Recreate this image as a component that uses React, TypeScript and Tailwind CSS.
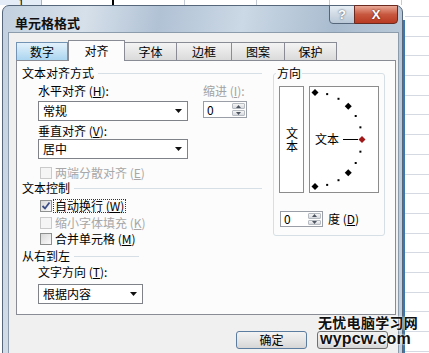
import React from "react"

const ROWS = Array.from({ length: 18 })

function Arrow() {
  return (
    <svg width="7" height="4" viewBox="0 0 7 4">
      <path d="M0 0h7L3.5 4z" fill="#111" />
    </svg>
  )
}

function Select({ text, className }: { text: string; className: string }) {
  return (
    <div className={`flex h-[20px] items-center border border-[#7f8288] bg-white pl-[4px] pr-[5px] ${className}`}>
      <span className="flex-1">{text}</span>
      <Arrow />
    </div>
  )
}

function Spin({ className }: { className: string }) {
  return (
    <div className={`flex items-stretch border border-[#9a9ea6] bg-white ${className}`}>
      <span className="flex flex-1 items-center pl-[3px]">0</span>
      <div className="flex w-[15px] flex-col gap-px p-px">
        <div className="flex flex-1 items-center justify-center rounded-[1px] border border-[#b7bbc2] bg-[linear-gradient(#f6f6f6,#d6d9de)]">
          <svg width="5" height="3" viewBox="0 0 5 3">
            <path d="M0 3h5L2.5 0z" fill="#4d5560" />
          </svg>
        </div>
        <div className="flex flex-1 items-center justify-center rounded-[1px] border border-[#b7bbc2] bg-[linear-gradient(#f6f6f6,#d6d9de)]">
          <svg width="5" height="3" viewBox="0 0 5 3">
            <path d="M0 0h5L2.5 3z" fill="#4d5560" />
          </svg>
        </div>
      </div>
    </div>
  )
}

function Check({ checked, disabled }: { checked?: boolean; disabled?: boolean }) {
  return (
    <span
      className={`flex h-[12px] w-[12px] shrink-0 items-center justify-center border ${
        disabled ? "border-[#cacaca] bg-[#f5f5f5]" : "border-[#8e8f8f] bg-[linear-gradient(135deg,#d9d9d9,#fbfbfb)]"
      }`}
    >
      {checked && (
        <svg width="10" height="10" viewBox="0 0 10 10">
          <path d="M1.5 5l2.5 2.5L8.5 1.5" fill="none" stroke="#3b4d86" strokeWidth="1.8" />
        </svg>
      )}
    </span>
  )
}

function Group({ label, line }: { label: string; line: string }) {
  return (
    <div className="flex items-center pl-[5px]">
      <span>{label}</span>
      <span className={`ml-[4px] h-px bg-[#d5dfe5] ${line}`} />
    </div>
  )
}

// points on the orientation arc, every 15 degrees
const ARC = Array.from({ length: 13 }).map((_, i) => {
  const deg = 90 - i * 15
  const r = (deg * Math.PI) / 180
  return { deg, x: 5 + 47 * Math.cos(r), y: 52.5 - 47 * Math.sin(r) }
})

function Diamond({ x, y, color }: { x: number; y: number; color: string }) {
  return <path d={`M${x} ${y - 3.5}L${x + 3.5} ${y}L${x} ${y + 3.5}L${x - 3.5} ${y}z`} fill={color} />
}

export default function App() {
  return (
    <div className="relative h-[353px] w-[429px] overflow-hidden bg-white font-['Noto_Sans_CJK_SC','Noto_Sans',sans-serif] text-[12px] leading-[12px] text-black">
      {/* Sheet behind the dialog */}
      <div className="absolute inset-0">
        <div className="flex h-[5px]">
          <div className="w-[42px] overflow-hidden border-r border-[#9eb6ce] bg-[#e4ecf7] pl-[18px] text-[11px] leading-[5px]">1</div>
          <div className="relative w-[143px] border-r border-[#c5cbd6]">
            <span className="absolute left-[70px] top-0 h-[5px] w-[2px] bg-black" />
          </div>
          <div className="w-[72px] border-r border-[#c5cbd6]" />
          <div className="w-[73px] border-r border-[#c5cbd6]" />
          <div className="w-[72px] border-r border-[#c5cbd6]" />
        </div>
        <div className="absolute bottom-0 left-[405px] right-0 top-0 flex flex-col">
          <div className="h-[17px] shrink-0 border-b border-[#d4d9e2]" />
          {ROWS.map((_, i) => (
            <div key={i} className="h-[19.7px] shrink-0 border-b border-[#d4d9e2]" />
          ))}
        </div>
        <div className="absolute bottom-0 left-[403px] top-[20px] w-[2px] bg-[#3b78ae]" />
      </div>

      {/* Dialog */}
      <div className="absolute left-[2px] top-[5px] flex h-[380px] w-[401px] flex-col rounded-t-[7px] border border-[#56677c] bg-[linear-gradient(100deg,#c2d0df_0%,#d6e0ea_18%,#b1c2d5_34%,#cbd8e5_52%,#a9bccf_72%,#c6d3e1_100%)]">
        <div className="flex h-[26px] shrink-0 items-start justify-between">
          <div className="pl-[12px] pt-[10px] text-[13px] font-bold leading-[13px] text-[#101010]">单元格格式</div>
          <div className="-mt-px mr-[4px] flex">
            <div className="flex h-[19px] w-[26px] items-center justify-center rounded-bl-[4px] border border-[#55667b] bg-[linear-gradient(#e6edf4,#b9c7d6)] font-['Liberation_Sans',sans-serif] text-[13px] font-bold text-white [text-shadow:0_0_2px_#2c3e55]">
              ?
            </div>
            <div className="-ml-px flex h-[19px] w-[44px] items-center justify-center rounded-br-[4px] border border-[#6a2a20] bg-[linear-gradient(#e9a896,#c8573f_50%,#b83a22)] font-['Liberation_Sans',sans-serif] text-[13px] font-bold text-white [text-shadow:0_0_2px_#4a1008]">
              X
            </div>
          </div>
        </div>

        <div className="ml-[5px] mr-[3px] flex flex-1 flex-col border border-b-0 border-[#8d9cad] bg-[#f0f0f0] pt-[7px]">
          {/* Tabs */}
          <div className="ml-[7px] flex h-[20px] items-end">
            <div className="flex h-[18px] w-[52px] items-center justify-center border border-b-0 border-[#7293b3] bg-[linear-gradient(#e3f1fb,#abd5f0)]">数字</div>
            <div className="relative z-10 -mb-px flex h-[21px] w-[57px] items-center justify-center border border-b-0 border-[#898c95] bg-[#fcfcfc]">对齐</div>
            <div className="flex h-[18px] w-[52px] items-center justify-center border border-b-0 border-l-0 border-[#898c95] bg-[linear-gradient(#f4f4f4,#dadada)]">字体</div>
            <div className="flex h-[18px] w-[55px] items-center justify-center border border-b-0 border-l-0 border-[#898c95] bg-[linear-gradient(#f4f4f4,#dadada)]">边框</div>
            <div className="flex h-[18px] w-[53px] items-center justify-center border border-b-0 border-l-0 border-[#898c95] bg-[linear-gradient(#f4f4f4,#dadada)]">图案</div>
            <div className="flex h-[18px] w-[52px] items-center justify-center border border-b-0 border-l-0 border-[#898c95] bg-[linear-gradient(#f4f4f4,#dadada)]">保护</div>
          </div>

          {/* Panel */}
          <div className="ml-[7px] flex h-[255px] w-[380px] border border-[#898c95] bg-[#fcfcfc]">
            <div className="flex w-[245px] flex-col">
              <div className="mt-[6px]">
                <Group label="文本对齐方式" line="flex-1" />
              </div>
              <div className="mt-[6px] flex pl-[21px]">
                <span className="w-[165px]">
                  水平对齐 (<span className="underline">H</span>):
                </span>
                <span className="text-[#a3a3a3]">
                  缩进 (<span className="underline">I</span>):
                </span>
              </div>
              <div className="mt-[4px] flex items-start pl-[21px]">
                <Select text="常规" className="w-[150px]" />
                <Spin className="ml-[15px] h-[17px] w-[44px]" />
              </div>
              <div className="mt-[4px] pl-[21px]">
                垂直对齐 (<span className="underline">V</span>):
              </div>
              <div className="mt-[2px] pl-[21px]">
                <Select text="居中" className="w-[150px]" />
              </div>
              <div className="mt-[8px] flex items-center gap-[3px] pl-[23px] text-[#a7a7a7]">
                <Check disabled />
                <span>
                  两端分散对齐 (<span className="underline">E</span>)
                </span>
              </div>
              <div className="mt-[3px]">
                <Group label="文本控制" line="flex-1" />
              </div>
              <div className="mt-[5px] flex items-center gap-[1px] pl-[23px]">
                <Check checked />
                <span className="border border-dotted border-[#333] px-[1px]">
                  自动换行 (<span className="underline">W</span>)
                </span>
              </div>
              <div className="mt-[4px] flex items-center gap-[3px] pl-[23px] text-[#a7a7a7]">
                <Check disabled />
                <span>
                  缩小字体填充 (<span className="underline">K</span>)
                </span>
              </div>
              <div className="mt-[4px] flex items-center gap-[3px] pl-[23px]">
                <Check />
                <span>
                  合并单元格 (<span className="underline">M</span>)
                </span>
              </div>
              <div className="mt-[5px]">
                <Group label="从右到左" line="w-[65px]" />
              </div>
              <div className="mt-[4px] pl-[21px]">
                文字方向 (<span className="underline">T</span>):
              </div>
              <div className="mt-[6px] pl-[21px]">
                <Select text="根据内容" className="w-[105px]" />
              </div>
            </div>

            {/* Orientation */}
            <div className="relative ml-[11px] mt-[12px] flex h-[163px] w-[112px] flex-col rounded-[3px] border border-[#d5dfe5] pl-[5px] pt-[12px]">
              <span className="absolute -top-[7px] left-[2px] bg-[#fcfcfc] px-px">方向</span>
              <div className="flex gap-[5px]">
                <div className="flex h-[107px] w-[25px] items-center justify-center border border-[#8c8c8c] bg-white">
                  <span className="leading-[12px] tracking-[1px] [writing-mode:vertical-rl]">文本</span>
                </div>
                <div className="relative h-[107px] w-[70px] border border-[#8c8c8c] bg-white">
                  <svg className="absolute inset-0" width="68" height="105" viewBox="0 0 68 105">
                    {ARC.map((p) =>
                      p.deg === 0 ? (
                        <Diamond key={p.deg} x={p.x} y={p.y} color="#a01818" />
                      ) : Math.abs(p.deg) % 45 === 0 ? (
                        <Diamond key={p.deg} x={p.x} y={p.y} color="#000" />
                      ) : (
                        <rect key={p.deg} x={p.x - 1} y={p.y - 1} width="2" height="2" fill="#000" />
                      )
                    )}
                    <line x1="33" y1="52.5" x2="48" y2="52.5" stroke="#000" strokeWidth="1" />
                  </svg>
                  <span className="absolute left-[5px] top-[46px]">文本</span>
                </div>
              </div>
              <div className="ml-px mt-[18px] flex items-center">
                <Spin className="h-[16px] w-[43px]" />
                <span className="ml-[5px]">
                  度 (<span className="underline">D</span>)
                </span>
              </div>
            </div>
          </div>

          {/* Buttons */}
          <div className="ml-[227px] mt-[16px] flex gap-[10px]">
            <div className="flex h-[18px] w-[71px] items-center justify-center rounded-[3px] border border-[#5c7da0] bg-[linear-gradient(#f3f3f3,#e6e6e6_50%,#d6d6d6)]">确定</div>
            <div className="h-[18px] w-[71px] rounded-[3px] border border-[#707070] bg-[linear-gradient(#f3f3f3,#e6e6e6_50%,#d6d6d6)]" />
          </div>
        </div>
      </div>

      {/* Watermark */}
      <div className="absolute left-[318px] top-[314px] flex flex-col items-start font-bold text-[#111] [text-shadow:0_0_2px_#fff,0_0_2px_#fff]">
        <span className="text-[14px] leading-[17px] tracking-[0.3px]">无忧电脑学习网</span>
        <span className="ml-[2px] font-['Liberation_Sans',sans-serif] text-[16px] leading-[15px] tracking-[0.2px]">wypcw.com</span>
      </div>
    </div>
  )
}
